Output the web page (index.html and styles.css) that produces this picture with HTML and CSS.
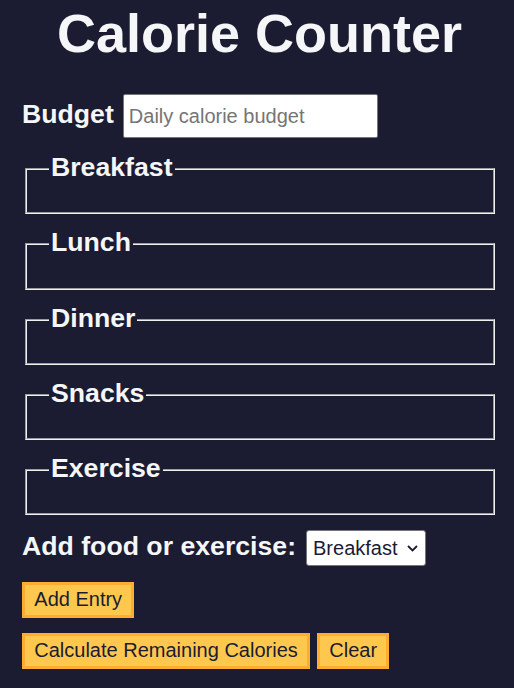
FILE: index.html
```html
<!DOCTYPE html>
<html lang="en">
<head>
<meta charset="utf-8">
<title>Calorie Counter</title>
<link rel="stylesheet" href="styles.css">
</head>
<body>
<main class="page">
  <h1 class="title">Calorie Counter</h1>
  <form class="counter-form">
    <div class="budget-row">
      <label class="field-label" for="budget">Budget</label>
      <input class="budget-input" type="number" min="0" id="budget" placeholder="Daily calorie budget">
    </div>
    <fieldset class="meal"><legend class="meal-legend">Breakfast</legend><div class="input-container"></div></fieldset>
    <fieldset class="meal"><legend class="meal-legend">Lunch</legend><div class="input-container"></div></fieldset>
    <fieldset class="meal"><legend class="meal-legend">Dinner</legend><div class="input-container"></div></fieldset>
    <fieldset class="meal"><legend class="meal-legend">Snacks</legend><div class="input-container"></div></fieldset>
    <fieldset class="meal"><legend class="meal-legend">Exercise</legend><div class="input-container"></div></fieldset>
    <div class="entry-row">
      <label class="field-label" for="entry-dropdown">Add food or exercise:</label>
      <span class="select-wrap">
        <select class="entry-select" id="entry-dropdown" name="options">
          <option value="breakfast" selected>Breakfast</option>
          <option value="lunch">Lunch</option>
          <option value="dinner">Dinner</option>
          <option value="snacks">Snacks</option>
          <option value="exercise">Exercise</option>
        </select>
        <svg class="chevron" width="11" height="7" viewBox="0 0 11 7" aria-hidden="true"><polyline points="1,1 5.5,5.5 10,1" fill="none" stroke="#1b1b32" stroke-width="1.8"/></svg>
      </span>
    </div>
    <div class="button-row">
      <button class="btn" type="button">Add Entry</button>
    </div>
    <div class="button-row">
      <button class="btn" type="button">Calculate Remaining Calories</button>
      <button class="btn" type="button">Clear</button>
    </div>
  </form>
</main>
</body>
</html>
```

FILE: styles.css
```css
* {
  box-sizing: border-box;
}

body {
  margin: 0;
  background-color: #1b1b32;
  color: #f5f6f7;
  font-family: "Liberation Sans", Arial, sans-serif;
}

.page {
  padding: 0 17px 0 22px;
}

.title {
  margin: 2px 0 30px;
  font-size: 54px;
  line-height: 62px;
  font-weight: bold;
  text-align: center;
}

.counter-form {
  margin: 0;
}

.field-label {
  font-size: 26.67px;
  line-height: 31px;
  font-weight: bold;
}

.budget-row {
  display: flex;
  align-items: baseline;
  gap: 9px;
  margin-bottom: 14px;
}

.budget-input {
  width: 255px;
  height: 44px;
  padding: 0 5px;
  font-family: "Liberation Sans", Arial, sans-serif;
  font-size: 20px;
  color: #1b1b32;
  background: #fff;
  border: 1px solid #767676;
  border-radius: 2px;
}

.budget-input::placeholder {
  color: #757575;
}

.meal {
  margin: 0 2px 13px 3px;
  padding: 8px 22px 18.25px;
  border: 2px groove #f0f0f0;
  min-width: 0;
}

.meal-legend {
  padding: 0 2px 3px;
  font-size: 26.67px;
  line-height: 31px;
  font-weight: bold;
}

.entry-row {
  display: flex;
  align-items: baseline;
  gap: 10px;
  margin: 15px 0 15.5px;
}

.select-wrap {
  position: relative;
  display: inline-block;
}

.entry-select {
  appearance: none;
  -webkit-appearance: none;
  width: 120px;
  height: 36px;
  padding: 0 24px 0 6px;
  font-family: "Liberation Sans", Arial, sans-serif;
  font-size: 20px;
  color: #1b1b32;
  background-color: #fff;
  border: 1px solid #767676;
  border-radius: 3px;
}

.chevron {
  position: absolute;
  right: 8px;
  top: 15px;
  pointer-events: none;
}

.button-row {
  display: flex;
  gap: 7px;
  margin-bottom: 15px;
}

.btn {
  height: 36px;
  padding: 0 9.3px;
  font-family: "Liberation Sans", Arial, sans-serif;
  font-size: 20px;
  color: #1b1b32;
  background-color: #fec84e;
  border: 3px solid #feac32;
  border-radius: 0;
  cursor: pointer;
}
```
